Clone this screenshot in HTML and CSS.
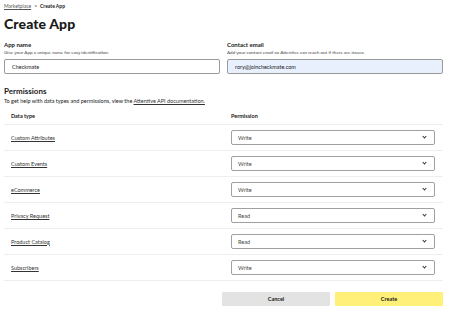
FILE: index.html
```html
<!DOCTYPE html>
<html lang="en">

<head>
    <meta charset="UTF-8" />
    <meta name="viewport" content="width=device-width, initial-scale=1.0" />
    <title>Create App</title>
    <link rel="stylesheet" href="styles.css">
</head>

<body>
    <nav class="crumbs">
        <a href="#">Marketplace</a>
        <span class="sep">&gt;</span>
        <span class="current">Create App</span>
    </nav>

    <h1>Create App</h1>

    <form>
        <div class="fields">
            <div class="field">
                <label>App name</label>
                <p class="hint">Give your App a unique name for easy identification.</p>
                <input type="text" value="Checkmate">
            </div>
            <div class="field">
                <label>Contact email</label>
                <p class="hint">Add your contact email so Attentive can reach out if there are issues.</p>
                <input type="text" class="filled" value="rory@joincheckmate.com">
            </div>
        </div>

        <h2>Permissions</h2>
        <p class="intro">To get help with data types and permissions, view the <a href="#">Attentive API documentation.</a></p>

        <div class="table">
            <div class="row head">
                <div class="cell">Data type</div>
                <div class="cell">Permission</div>
            </div>
            <div class="row">
                <div class="cell"><a href="#">Custom Attributes</a></div>
                <div class="cell"><div class="select">Write<span class="chev"></span></div></div>
            </div>
            <div class="row">
                <div class="cell"><a href="#">Custom Events</a></div>
                <div class="cell"><div class="select">Write<span class="chev"></span></div></div>
            </div>
            <div class="row">
                <div class="cell"><a href="#">eCommerce</a></div>
                <div class="cell"><div class="select">Write<span class="chev"></span></div></div>
            </div>
            <div class="row">
                <div class="cell"><a href="#">Privacy Request</a></div>
                <div class="cell"><div class="select">Read<span class="chev"></span></div></div>
            </div>
            <div class="row">
                <div class="cell"><a href="#">Product Catalog</a></div>
                <div class="cell"><div class="select">Read<span class="chev"></span></div></div>
            </div>
            <div class="row">
                <div class="cell"><a href="#">Subscribers</a></div>
                <div class="cell"><div class="select">Write<span class="chev"></span></div></div>
            </div>
        </div>

        <div class="actions">
            <button type="button" class="cancel">Cancel</button>
            <button type="submit" class="create">Create</button>
        </div>
    </form>
</body>

</html>
```

FILE: styles.css
```css
* {
    box-sizing: border-box;
}

body {
    font-family: Lato, "Open Sans", sans-serif;
    margin: 0;
    padding: 3px 9px 0 4px;
    color: #1a1a1a;
    background: #fff;
}

a {
    color: #333;
}

.crumbs {
    font-size: 5px;
    height: 7px;
    line-height: 7px;
    display: flex;
    gap: 3px;
}

.crumbs a {
    color: #555;
}

.crumbs .current {
    font-weight: 700;
}

h1 {
    font-size: 14px;
    font-weight: 900;
    margin: 6px 0 0;
    line-height: 16px;
    letter-spacing: 0.1px;
}

.fields {
    display: grid;
    grid-template-columns: 1fr 1fr;
    gap: 7px;
    margin-top: 9px;
}

.field label {
    display: block;
    font-size: 6px;
    font-weight: 700;
    line-height: 8px;
}

.hint {
    font-size: 4.6px;
    color: #444;
    margin: 0;
    line-height: 7px;
}

.field input {
    display: block;
    width: 100%;
    height: 15px;
    margin-top: 3px;
    border: 1px solid #9a9a9a;
    border-radius: 2px;
    padding: 0 7px;
    font-family: inherit;
    font-size: 5.5px;
    color: #222;
}

.field input.filled {
    background: #e8f0fe;
}

h2 {
    font-size: 8px;
    font-weight: 700;
    margin: 12px 0 0;
    line-height: 10px;
}

.intro {
    font-size: 5.5px;
    margin: 1px 0 0;
    line-height: 8px;
}

.table {
    margin-top: 8px;
}

.row {
    display: grid;
    grid-template-columns: 220px 1fr;
    height: 26px;
    align-items: center;
    border-bottom: 1px solid #eee;
}

.row.head {
    height: 12px;
    font-size: 5.5px;
    font-weight: 700;
    align-items: start;
}

.cell {
    padding: 0 8px 0 7px;
    font-size: 5.5px;
}

.cell a {
    color: #333;
}

.select {
    height: 15px;
    border: 1px solid #a0a0a0;
    border-radius: 2px;
    display: flex;
    align-items: center;
    justify-content: space-between;
    padding: 0 8px 0 6px;
    color: #444;
}

.chev {
    width: 3px;
    height: 3px;
    border-right: 1px solid #333;
    border-bottom: 1px solid #333;
    transform: rotate(45deg);
    margin-top: -2px;
}

.actions {
    display: flex;
    justify-content: flex-end;
    gap: 5px;
    margin-top: 11px;
}

.actions button {
    width: 108px;
    height: 14px;
    border: none;
    border-radius: 1px;
    font-family: inherit;
    font-size: 5.5px;
    font-weight: 700;
    color: #1a1a1a;
}

.cancel {
    background: #e3e3e3;
}

.create {
    background: #fff07a;
}
```
